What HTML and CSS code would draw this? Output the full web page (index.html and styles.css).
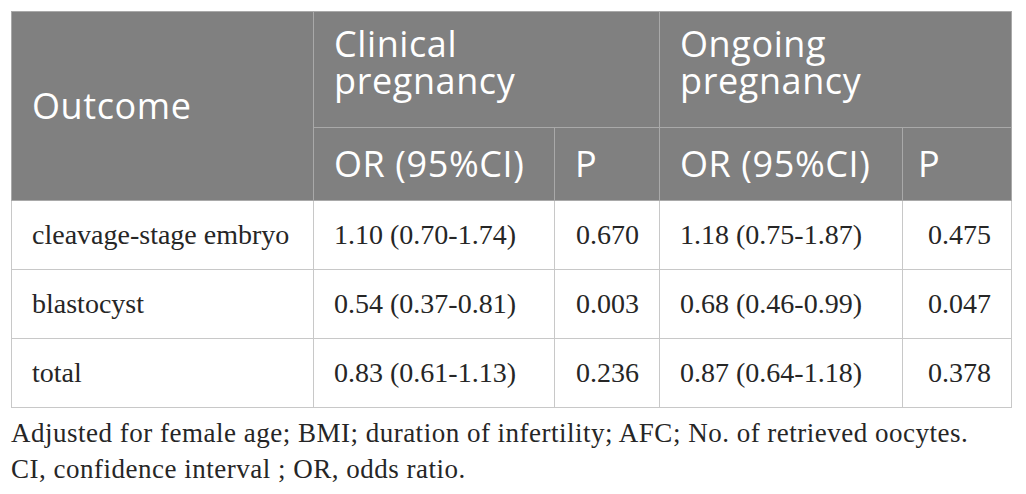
FILE: index.html
```html
<!DOCTYPE html>
<html>
<head>
<meta charset="utf-8">
<link rel="stylesheet" href="styles.css">
</head>
<body>
<table class="data">
  <colgroup>
    <col class="c1"><col class="c2"><col class="c3"><col class="c4"><col class="c5">
  </colgroup>
  <thead>
    <tr class="h1">
      <th rowspan="2" class="outcome">Outcome</th>
      <th colspan="2" class="group">Clinical<br>pregnancy</th>
      <th colspan="2" class="group">Ongoing<br>pregnancy</th>
    </tr>
    <tr class="h2">
      <th>OR (95%CI)</th>
      <th class="p">P</th>
      <th>OR (95%CI)</th>
      <th class="p p2">P</th>
    </tr>
  </thead>
  <tbody>
    <tr>
      <td>cleavage-stage embryo</td>
      <td>1.10 (0.70-1.74)</td>
      <td class="num">0.670</td>
      <td>1.18 (0.75-1.87)</td>
      <td class="num">0.475</td>
    </tr>
    <tr>
      <td>blastocyst</td>
      <td>0.54 (0.37-0.81)</td>
      <td class="num">0.003</td>
      <td>0.68 (0.46-0.99)</td>
      <td class="num">0.047</td>
    </tr>
    <tr>
      <td>total</td>
      <td>0.83 (0.61-1.13)</td>
      <td class="num">0.236</td>
      <td>0.87 (0.64-1.18)</td>
      <td class="num">0.378</td>
    </tr>
  </tbody>
</table>
<div class="notes">
  <p>Adjusted for female age; BMI; duration of infertility; AFC; No. of retrieved oocytes.</p>
  <p>CI, confidence interval ; OR, odds ratio.</p>
</div>
</body>
</html>
```
FILE: styles.css
```css
html, body {
  margin: 0;
  padding: 0;
  background: #ffffff;
}
body {
  padding: 11px 0 0 11px;
}
.data {
  border-collapse: collapse;
  table-layout: fixed;
  width: 1000px;
}
.c1 { width: 302px; }
.c2 { width: 241px; }
.c3 { width: 105px; }
.c4 { width: 243px; }
.c5 { width: 109px; }
.data th {
  background: #808080;
  color: #ffffff;
  font-family: "Open Sans", sans-serif;
  font-weight: 400;
  font-size: 36px;
  letter-spacing: 0.6px;
  line-height: 40px;
  text-align: left;
  vertical-align: middle;
  padding: 0 0 0 20px;
  border: 1px solid #a9a9a9;
  white-space: nowrap;
}
.data .h1 th { height: 115px; }
.data .h1 th.group { vertical-align: top; padding-top: 13px; height: 102px; line-height: 37px; }
.data .h2 th { height: 72px; }
.data .h2 th.p2 { padding-left: 15px; }
.data td {
  font-family: "Liberation Serif", serif;
  font-size: 28px;
  color: #262626;
  height: 68px;
  padding: 0 20px;
  vertical-align: middle;
  border: 1px solid #c8c8c8;
  white-space: nowrap;
}
.data td.num { text-align: right; }
.notes {
  margin-top: 7px;
  font-family: "Liberation Serif", serif;
  font-size: 27px;
  letter-spacing: 0.5px;
  color: #262626;
}
.notes p {
  margin: 0;
  line-height: 36px;
}
```
